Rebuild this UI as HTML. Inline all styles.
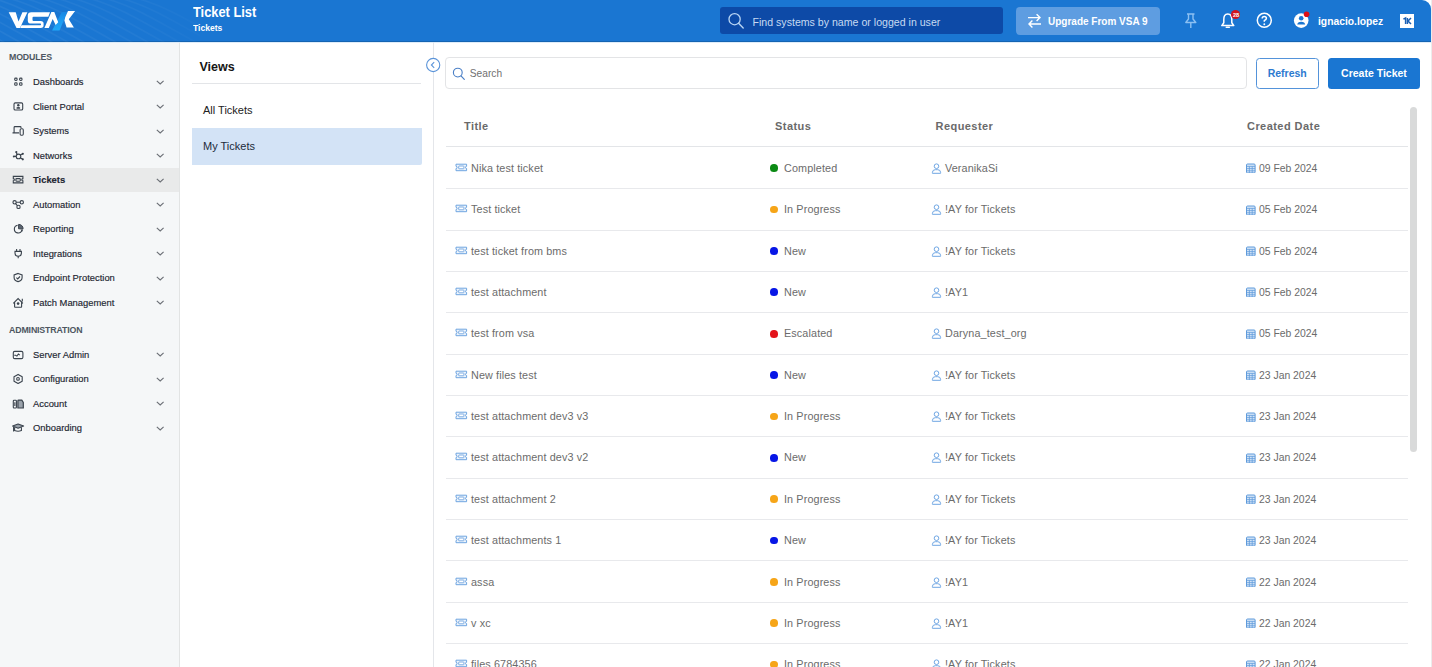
<!DOCTYPE html>
<html><head><meta charset="utf-8">
<style>
*{box-sizing:border-box;margin:0;padding:0}
html,body{width:1432px;height:667px;overflow:hidden;background:#fff;font-family:"Liberation Sans",sans-serif}
.abs{position:absolute}
svg{display:block}
#hdr{position:absolute;left:0;top:0;width:1431px;height:42px;background:#1a76d2;border-top-right-radius:9px;overflow:hidden}
#hdr .line{position:absolute;left:0;right:0;bottom:0;height:1px;background:#1464b2}
.ht{position:absolute;color:#fff;white-space:nowrap}
#side{position:absolute;left:0;top:42px;width:180px;height:625px;background:#f5f7f8;border-right:1px solid #e2e4e4}
.sec{position:absolute;left:9px;font-size:8.8px;font-weight:bold;color:#4d5661;letter-spacing:-.15px}
.it{position:absolute;left:0;width:179px;height:24px}
.it .tx{position:absolute;left:33px;top:6.7px;font-size:9.4px;color:#1c2530;white-space:nowrap;-webkit-text-stroke:.15px #1c2530}
.it svg.ic{position:absolute;left:10.5px;top:4.5px}
.it svg.ch{position:absolute;left:156px;top:10px}
.it.sel{background:#e9eaea}
.it.sel .tx{font-weight:bold}
#views{position:absolute;left:180px;top:42px;width:254px;height:625px;background:#fff;border-right:1px solid #e4e6ea}
#main{position:absolute;left:434px;top:42px;width:998px;height:625px;background:#fff}
.row{position:absolute;left:12px;width:962px;height:41.4px;border-bottom:1px solid #e8e9ec}
.row .c{position:absolute;top:14px;font-size:10.8px;letter-spacing:.12px;color:#6b6b6b;white-space:nowrap}
.row svg.tk{position:absolute;left:8.5px;top:15px}
.row svg.us{position:absolute;left:485px;top:15px}
.row svg.cal{position:absolute;left:799.5px;top:15.5px}
.dot{position:absolute;left:324.2px;top:16.6px;width:7.7px;height:7.7px;border-radius:50%}
.dot.g{background:#0b8a14}.dot.o{background:#f6a518}.dot.b{background:#0716e6}.dot.r{background:#e3141b}
.th{position:absolute;top:78px;font-size:11px;font-weight:bold;color:#6a6a6a;letter-spacing:.45px;white-space:nowrap}
</style></head><body>


<div id="hdr">
  <div class="line"></div>
  <svg class="abs" style="left:0;top:0" width="200" height="42" viewBox="0 0 200 42"><defs><linearGradient id="wg" x1="0" y1="0" x2="1" y2="0"><stop offset="0" stop-color="#fff" stop-opacity=".06"/><stop offset=".75" stop-color="#fff" stop-opacity=".035"/><stop offset="1" stop-color="#fff" stop-opacity="0"/></linearGradient></defs><path d="M-120,-2 C-90,6 -65,22 -25,44 M-104,-2 C-74,6 -49,22 -9,44 M-88,-2 C-58,6 -33,22 7,44 M-72,-2 C-42,6 -17,22 23,44 M-56,-2 C-26,6 -1,22 39,44 M-40,-2 C-10,6 15,22 55,44 M-24,-2 C6,6 31,22 71,44 M-8,-2 C22,6 47,22 87,44 M8,-2 C38,6 63,22 103,44 M24,-2 C54,6 79,22 119,44 M40,-2 C70,6 95,22 135,44 M56,-2 C86,6 111,22 151,44 M72,-2 C102,6 127,22 167,44 M88,-2 C118,6 143,22 183,44 M104,-2 C134,6 159,22 199,44 M120,-2 C150,6 175,22 215,44 M136,-2 C166,6 191,22 231,44" fill="none" stroke="url(#wg)" stroke-width="1.6"/></svg>
  <!-- logo -->
  <svg class="abs" style="left:8px;top:11px" width="70" height="21" viewBox="0 0 70 21">
    <path d="M0.7,1.3 H7.7 L10.5,10.4 L14.4,1.3 H19.4 L12,16.9 H8.5 Z" fill="#fff"/>
    <path d="M23.5,1.3 H42 L40.3,5.8 H25.5 Q24.5,5.8 24.5,6.8 V8.9 Q24.5,9.9 25.5,9.9 H32.6 Q35.6,9.9 35.6,12.6 V14.2 Q35.6,16.9 32.6,16.9 H12.2 L13.5,14.2 H32.4 Q33,14.2 33,13.4 Q33,12.6 32.4,12.6 H23.2 Q19.8,12.6 19.8,9.4 V4.6 Q19.8,1.3 23.5,1.3 Z" fill="#fff"/>
    <defs><linearGradient id="lg1" x1="0" y1="0" x2="0" y2="1"><stop offset="0" stop-color="#1a86e2"/><stop offset="0.4" stop-color="#1c98ef"/><stop offset="1" stop-color="#21a9f9"/></linearGradient></defs><path d="M53.8,0.9 H59.3 L51.5,19.6 H44.1 Z" fill="url(#lg1)"/>
    <path d="M36.4,16.9 L43.4,0.9 H46.3 L50.2,11.2 L47.6,14 L44.7,7.9 L40.8,16.9 Z" fill="#fff"/>
    <path d="M60,0.1 H67.1 L60.8,8.3 L65.9,16.5 H58.6 L56.4,9.5 L57.2,6.2 Z" fill="#fff"/>
  </svg>
  <div class="ht" style="left:192.5px;top:3.5px;font-size:14.2px;font-weight:bold;transform:scaleX(.905);transform-origin:0 0">Ticket List</div>
  <div class="ht" style="left:192.8px;top:23.3px;font-size:9.2px;font-weight:bold;transform:scaleX(.93);transform-origin:0 0">Tickets</div>
  <!-- search -->
  <div class="abs" style="left:720px;top:7px;width:283px;height:27px;background:#0d4aa7;border-radius:3px"></div>
  <svg class="abs" style="left:727px;top:12px" width="18" height="18" viewBox="0 0 18 18"><circle cx="7.6" cy="7.2" r="5.6" fill="none" stroke="#b9d5f4" stroke-width="1.3"/><path d="M11.6,11.3 L16.2,15.9" stroke="#b9d5f4" stroke-width="1.4" stroke-linecap="round"/></svg>
  <div class="ht" style="left:752.5px;top:15.5px;font-size:10.6px;color:#c7daf2">Find systems by name or logged in user</div>
  <!-- upgrade -->
  <div class="abs" style="left:1016px;top:7px;width:144px;height:27.5px;background:#5e9de1;border-radius:4px"></div>
  <svg class="abs" style="left:1027px;top:13px" width="15" height="16" viewBox="0 0 15 16"><path d="M1,4.6 H13 M9.6,1.2 L13,4.6 L9.6,8" fill="none" stroke="#fff" stroke-width="1.4"/><path d="M14,11 H2 M5.4,7.6 L2,11 L5.4,14.4" fill="none" stroke="#fff" stroke-width="1.4"/></svg>
  <div class="ht" style="left:1048px;top:15.6px;font-size:10px;font-weight:bold">Upgrade From VSA 9</div>
  <!-- pin -->
  <svg class="abs" style="left:1184px;top:13px" width="14" height="16" viewBox="0 0 14 16"><path d="M3,1 H10.5 M4.5,1 V6 L1.8,9.5 H11.8 L9,6 V1 M6.8,9.5 V15" fill="none" stroke="#8cc0f2" stroke-width="1.4" stroke-linejoin="round"/></svg>
  <!-- bell -->
  <svg class="abs" style="left:1220px;top:12px" width="16" height="17" viewBox="0 0 16 17"><path d="M7.8,2 C4.6,2 3.8,4.6 3.8,7.5 V10.8 L1.8,13.6 H13.8 L11.8,10.8 V7.5 C11.8,4.6 11,2 7.8,2 Z" fill="none" stroke="#fff" stroke-width="1.5" stroke-linejoin="round"/><path d="M6.3,15.2 H9.3" stroke="#fff" stroke-width="1.6" stroke-linecap="round"/></svg>
  <div class="abs" style="left:1230.5px;top:9.8px;width:9.6px;height:9.6px;border-radius:50%;background:#d3121c"></div><svg class="abs" style="left:1230.5px;top:9.8px" width="10" height="10" viewBox="0 0 10 10"><text x="4.9" y="7.1" text-anchor="middle" font-family="Liberation Sans" font-weight="bold" font-size="5.6" fill="#fff" letter-spacing="-0.2">28</text></svg>
  <!-- help -->
  <svg class="abs" style="left:1256px;top:12px" width="17" height="17" viewBox="0 0 17 17"><circle cx="8.3" cy="8.3" r="7" fill="none" stroke="#fff" stroke-width="1.5"/><path d="M6.2,6.5 Q6.2,4.4 8.3,4.4 Q10.4,4.4 10.4,6.3 Q10.4,7.6 8.3,8.6 V9.8" fill="none" stroke="#fff" stroke-width="1.5"/><circle cx="8.3" cy="12.2" r="0.95" fill="#fff"/></svg>
  <!-- avatar -->
  <svg class="abs" style="left:1293px;top:9px" width="20" height="21" viewBox="0 0 20 21"><circle cx="8.2" cy="11.6" r="7.3" fill="#fff"/><circle cx="8.2" cy="9.3" r="2.3" fill="#1a76d2"/><path d="M4.2,15.6 Q4.5,12.7 8.2,12.7 Q11.9,12.7 12.2,15.6 Z" fill="#1a76d2"/><circle cx="13.6" cy="5.3" r="2.8" fill="#dd0f17"/></svg>
  <div class="ht" style="left:1318px;top:15.5px;font-size:10.3px;font-weight:bold">ignacio.lopez</div>
  <!-- 1K -->
  <div class="abs" style="left:1400px;top:14px;width:14px;height:14px;background:#fff"></div>
  <svg class="abs" style="left:1400px;top:14px" width="14" height="14" viewBox="0 0 14 14"><path d="M3.4,5.2 L5.6,4 V10" fill="none" stroke="#1a5fb4" stroke-width="1.5"/><path d="M7.4,4 V10 M11,4 L8,7 L11,10" fill="none" stroke="#1a5fb4" stroke-width="1.5"/></svg>
</div>

<div id="side">
  <div class="sec" style="top:10px">MODULES</div>
  <!--SIDE-->
<div class="it" style="top:27.5px;height:24.5px"><svg class="ic" width="14" height="14" viewBox="0 0 14 14"><rect x="3.7" y="4.1" width="2.4" height="2.4" rx=".9" fill="none" stroke="#3a434d" stroke-width="1.1" stroke-width="1.45"/><rect x="8.6" y="4.1" width="2.4" height="2.4" rx=".9" fill="none" stroke="#3a434d" stroke-width="1.1" stroke-width="1.45"/><rect x="3.7" y="8.8" width="2.4" height="2.5" rx=".9" fill="none" stroke="#3a434d" stroke-width="1.1" stroke-width="1.45"/><rect x="8.6" y="8.8" width="2.4" height="2.5" rx=".9" fill="none" stroke="#3a434d" stroke-width="1.1" stroke-width="1.45"/></svg><span class="tx">Dashboards</span><svg class="ch" width="9" height="6" viewBox="0 0 9 6"><path d="M0.8,0.8 L4.2,4 L7.6,0.8" fill="none" stroke="#6b6f75" stroke-width="1.1"/></svg></div>
<div class="it" style="top:52.0px;height:24.5px"><svg class="ic" width="14" height="14" viewBox="0 0 14 14"><rect x="3" y="3.9" width="8.7" height="7.1" rx="1.3" fill="none" stroke="#3a434d" stroke-width="1.1" stroke-width="1.25"/><circle cx="7.3" cy="6.3" r="1.2" fill="#3a434d"/><ellipse cx="7.3" cy="8.9" rx="2" ry="0.85" fill="#3a434d"/></svg><span class="tx">Client Portal</span><svg class="ch" width="9" height="6" viewBox="0 0 9 6"><path d="M0.8,0.8 L4.2,4 L7.6,0.8" fill="none" stroke="#6b6f75" stroke-width="1.1"/></svg></div>
<div class="it" style="top:76.5px;height:24.5px"><svg class="ic" width="14" height="14" viewBox="0 0 14 14"><path d="M3.1,9.5 V4.4 Q3.1,3.6 3.9,3.6 H9.3 Q10,3.6 10,4.4 V5 M1.5,9.9 H8" fill="none" stroke="#3a434d" stroke-width="1.1"/><rect x="9.1" y="5.8" width="3.2" height="6.4" rx="1.1" fill="none" stroke="#3a434d" stroke-width="1.1"/></svg><span class="tx">Systems</span><svg class="ch" width="9" height="6" viewBox="0 0 9 6"><path d="M0.8,0.8 L4.2,4 L7.6,0.8" fill="none" stroke="#6b6f75" stroke-width="1.1"/></svg></div>
<div class="it" style="top:101.0px;height:24.5px"><svg class="ic" width="14" height="14" viewBox="0 0 14 14"><circle cx="7.5" cy="8.4" r="2.3" fill="none" stroke="#3a434d" stroke-width="1.1"/><path d="M5.2,8.4 H3 M6.2,6.4 L5.2,4.3 M9.3,7 L11.7,5.8 M9.3,9.8 L11.7,11.2" fill="none" stroke="#3a434d" stroke-width="1.1"/><circle cx="2.8" cy="8.4" r="1" fill="#3a434d"/><circle cx="5.3" cy="4.1" r="1.1" fill="#3a434d"/><circle cx="11.8" cy="5.8" r="1.1" fill="#3a434d"/><circle cx="11.8" cy="11.3" r="1.1" fill="#3a434d"/></svg><span class="tx">Networks</span><svg class="ch" width="9" height="6" viewBox="0 0 9 6"><path d="M0.8,0.8 L4.2,4 L7.6,0.8" fill="none" stroke="#6b6f75" stroke-width="1.1"/></svg></div>
<div class="it sel" style="top:125.5px;height:24.5px"><svg class="ic" width="14" height="14" viewBox="0 0 14 14"><path d="M2.3,4.4 H11.9 V6.6 A1.1,1.1 0 0 0 11.9,8.8 V10.9 H2.3 V8.8 A1.1,1.1 0 0 0 2.3,6.6 Z" fill="none" stroke="#3a434d" stroke-width="1.1"/><rect x="4.9" y="6.6" width="4.4" height="2.6" rx=".6" fill="none" stroke="#3a434d" stroke-width="1.1"/></svg><span class="tx">Tickets</span><svg class="ch" width="9" height="6" viewBox="0 0 9 6"><path d="M0.8,0.8 L4.2,4 L7.6,0.8" fill="none" stroke="#6b6f75" stroke-width="1.1"/></svg></div>
<div class="it" style="top:150.0px;height:24.5px"><svg class="ic" width="14" height="14" viewBox="0 0 14 14"><circle cx="3.6" cy="5.3" r="1.65" fill="none" stroke="#3a434d" stroke-width="1.1"/><circle cx="10.8" cy="5.3" r="1.65" fill="none" stroke="#3a434d" stroke-width="1.1"/><circle cx="7.5" cy="9.9" r="1.65" fill="none" stroke="#3a434d" stroke-width="1.1"/><path d="M5.2,5.3 H9.1 M4.6,6.6 L6.4,8.6" fill="none" stroke="#3a434d" stroke-width="1.1"/></svg><span class="tx">Automation</span><svg class="ch" width="9" height="6" viewBox="0 0 9 6"><path d="M0.8,0.8 L4.2,4 L7.6,0.8" fill="none" stroke="#6b6f75" stroke-width="1.1"/></svg></div>
<div class="it" style="top:174.5px;height:24.5px"><svg class="ic" width="14" height="14" viewBox="0 0 14 14"><path d="M6.6,4.2 A3.9,3.9 0 1 0 10.9,9.4" fill="none" stroke="#3a434d" stroke-width="1.1"/><path d="M7.6,3.4 A4.3,4.3 0 0 1 12.1,7.8 H7.6 Z" fill="#5b6470" stroke="#3a434d" stroke-width="1"/><path d="M9.6,8.6 L12.2,8.6 L11,11 Z" fill="#3a434d"/></svg><span class="tx">Reporting</span><svg class="ch" width="9" height="6" viewBox="0 0 9 6"><path d="M0.8,0.8 L4.2,4 L7.6,0.8" fill="none" stroke="#6b6f75" stroke-width="1.1"/></svg></div>
<div class="it" style="top:199.0px;height:24.5px"><svg class="ic" width="14" height="14" viewBox="0 0 14 14"><path d="M5.6,3 V5.2 M9,3 V5.2" fill="none" stroke="#3a434d" stroke-width="1.1" stroke-width="1.4"/><path d="M4,5.4 H10.4 V7.3 Q10.4,10 7.2,10.2 Q4,10 4,7.3 Z M7.2,10.2 V12.3" fill="none" stroke="#3a434d" stroke-width="1.1" stroke-width="1.3"/></svg><span class="tx">Integrations</span><svg class="ch" width="9" height="6" viewBox="0 0 9 6"><path d="M0.8,0.8 L4.2,4 L7.6,0.8" fill="none" stroke="#6b6f75" stroke-width="1.1"/></svg></div>
<div class="it" style="top:223.5px;height:24.5px"><svg class="ic" width="14" height="14" viewBox="0 0 14 14"><path d="M7.1,3.4 L11.1,4.9 V7.4 Q11.1,10.6 7.1,11.6 Q3.1,10.6 3.1,7.4 V4.9 Z" fill="none" stroke="#3a434d" stroke-width="1.1" stroke-width="1.25"/><path d="M5.4,7.7 L6.7,8.9 L9,6.5" fill="none" stroke="#3a434d" stroke-width="1.1" stroke-width="1.2"/></svg><span class="tx">Endpoint Protection</span><svg class="ch" width="9" height="6" viewBox="0 0 9 6"><path d="M0.8,0.8 L4.2,4 L7.6,0.8" fill="none" stroke="#6b6f75" stroke-width="1.1"/></svg></div>
<div class="it" style="top:248.0px;height:24.5px"><svg class="ic" width="14" height="14" viewBox="0 0 14 14"><path d="M2.3,8.3 L7.1,3.6 L11.9,8.3 M3.6,7.2 V11.8 Q3.6,12.2 4,12.2 H10.2 Q10.6,12.2 10.6,11.8 V7.2 M11.3,3.8 V6.6" fill="none" stroke="#3a434d" stroke-width="1.1" stroke-width="1.25"/><circle cx="7.1" cy="8.6" r="1.3" fill="#3a434d"/></svg><span class="tx">Patch Management</span><svg class="ch" width="9" height="6" viewBox="0 0 9 6"><path d="M0.8,0.8 L4.2,4 L7.6,0.8" fill="none" stroke="#6b6f75" stroke-width="1.1"/></svg></div>
<div class="it" style="top:300.0px;height:24.5px"><svg class="ic" width="14" height="14" viewBox="0 0 14 14"><rect x="2.3" y="4.4" width="9.6" height="7.2" rx="1.4" fill="none" stroke="#3a434d" stroke-width="1.1" stroke-width="1.2"/><path d="M3.2,8.3 H4.6 L5.9,9.1 L7.4,7 L8.8,8.2" fill="none" stroke="#3a434d" stroke-width="1.1" stroke-width="1.1"/></svg><span class="tx">Server Admin</span><svg class="ch" width="9" height="6" viewBox="0 0 9 6"><path d="M0.8,0.8 L4.2,4 L7.6,0.8" fill="none" stroke="#6b6f75" stroke-width="1.1"/></svg></div>
<div class="it" style="top:324.5px;height:24.5px"><svg class="ic" width="14" height="14" viewBox="0 0 14 14"><path d="M7.1,3.4 L11.2,5.7 V10.2 L7.1,12.5 L3,10.2 V5.7 Z" fill="none" stroke="#3a434d" stroke-width="1.1" stroke-width="1.2" stroke-linejoin="round"/><circle cx="7" cy="7.9" r="1.35" fill="none" stroke="#3a434d" stroke-width="1.1"/></svg><span class="tx">Configuration</span><svg class="ch" width="9" height="6" viewBox="0 0 9 6"><path d="M0.8,0.8 L4.2,4 L7.6,0.8" fill="none" stroke="#6b6f75" stroke-width="1.1"/></svg></div>
<div class="it" style="top:349.0px;height:24.5px"><svg class="ic" width="14" height="14" viewBox="0 0 14 14"><rect x="2.3" y="4.3" width="3.1" height="7.7" rx=".7" fill="none" stroke="#3a434d" stroke-width="1.1" stroke-width="1.2"/><path d="M3.85,6.3 V10" fill="none" stroke="#3a434d" stroke-width="1.1"/><path d="M6.9,12 H12.3 V6.4 L10.8,4.1 H7.5 Q6.9,4.1 6.9,4.7 Z" fill="#9aa2ab" stroke="#3a434d" stroke-width="1.2"/></svg><span class="tx">Account</span><svg class="ch" width="9" height="6" viewBox="0 0 9 6"><path d="M0.8,0.8 L4.2,4 L7.6,0.8" fill="none" stroke="#6b6f75" stroke-width="1.1"/></svg></div>
<div class="it" style="top:373.5px;height:24.5px"><svg class="ic" width="14" height="14" viewBox="0 0 14 14"><path d="M1.6,6.1 L7.1,4 L12.6,6.1 L7.1,8.2 Z" fill="#9aa2ab" stroke="#3a434d" stroke-width="1.1" stroke-linejoin="round"/><path d="M3.6,7.2 V10.6 Q7.1,12 10.4,10.6 V7.2" fill="none" stroke="#3a434d" stroke-width="1.1" stroke-width="1.2"/><path d="M2.6,7 V11.4" fill="none" stroke="#3a434d" stroke-width="1.1" stroke-width="1.4"/></svg><span class="tx">Onboarding</span><svg class="ch" width="9" height="6" viewBox="0 0 9 6"><path d="M0.8,0.8 L4.2,4 L7.6,0.8" fill="none" stroke="#6b6f75" stroke-width="1.1"/></svg></div>
<!--/SIDE-->
  <div class="sec" style="top:282.6px">ADMINISTRATION</div>
</div>

<div id="views">
  <div class="abs" style="left:19.5px;top:18px;font-size:12.5px;font-weight:bold;color:#161616">Views</div>
  <div class="abs" style="left:12px;top:41px;width:229px;height:1px;background:#e3e5e8"></div>
  <div class="abs" style="left:23px;top:61.8px;font-size:11px;color:#222">All Tickets</div>
  <div class="abs" style="left:12px;top:86px;width:229.7px;height:36.5px;background:#d3e3f6;border-radius:0 0 2px 0"></div>
  <div class="abs" style="left:23px;top:97.8px;font-size:11px;color:#1d2a3a">My Tickets</div>
</div>

<div id="main">
  <div class="abs" style="left:11px;top:15px;width:801.5px;height:31.6px;border:1px solid #e3e4e6;border-radius:4px"></div>
  <svg class="abs" style="left:17px;top:24px" width="16" height="16" viewBox="0 0 16 16"><circle cx="6.8" cy="6.6" r="4.4" fill="none" stroke="#4a7fc6" stroke-width="1.1"/><path d="M10,9.9 L13.3,13.3" stroke="#4a7fc6" stroke-width="1.2" stroke-linecap="round"/></svg>
  <div class="abs" style="left:35.8px;top:26.4px;font-size:10.2px;color:#707070">Search</div>
  <div class="abs" style="left:821.5px;top:16.2px;width:63.5px;height:30.5px;border:1px solid #5393da;border-radius:3.5px;color:#2d7ad0;font-size:10.5px;font-weight:bold;text-align:center;line-height:29.7px">Refresh</div>
  <div class="abs" style="left:894px;top:16.2px;width:92px;height:30.5px;background:#1a76d2;border-radius:3.5px;color:#fff;font-size:10.5px;font-weight:bold;text-align:center;line-height:31.7px">Create Ticket</div>
  <div class="th" style="left:30px">Title</div>
  <div class="th" style="left:341px">Status</div>
  <div class="th" style="left:501.5px">Requester</div>
  <div class="th" style="left:813px">Created Date</div>
  <div class="abs" style="left:12px;top:104px;width:962px;height:1px;background:#e3e5e8"></div>
  <!--ROWS-->
<div class="row" style="top:105.8px"><svg class="tk" width="13" height="9"><path d="M1,1.2 H11.6 V3.3 A1.1,1.1 0 0 0 11.6,5.5 V7.7 H1 V5.5 A1.1,1.1 0 0 0 1,3.3 Z" fill="#eef5fc" stroke="#6ea4e0" stroke-width="1"/><rect x="3.7" y="3" width="5.2" height="2.8" rx=".5" fill="#fff" stroke="#6ea4e0" stroke-width="0.9"/></svg><span class="c" style="left:25px">Nika test ticket</span><i class="dot g"></i><span class="c" style="left:338px">Completed</span><svg class="us" width="11" height="11"><circle cx="5.5" cy="3.2" r="2.3" fill="none" stroke="#6fa6e3" stroke-width="1"/><path d="M1.4,10.3 V9.4 A2.9,2.9 0 0 1 4.3,6.7 H6.7 A2.9,2.9 0 0 1 9.6,9.4 V10.3 Z" fill="none" stroke="#6fa6e3" stroke-width="1"/></svg><span class="c" style="left:499px">VeranikaSi</span><svg class="cal" width="10" height="10"><rect x="0.5" y="1" width="8.6" height="9" rx="1" fill="#d2e3f7" stroke="#5f9bdb" stroke-width="1"/><path d="M0.5,3.4 H9.1 M0.5,5.6 H9.1 M0.5,7.8 H9.1 M3.4,3.4 V10 M6.2,3.4 V10" stroke="#5f9bdb" stroke-width="0.75"/></svg><span class="c" style="left:813px;top:15px;font-size:10.4px;letter-spacing:0">09 Feb 2024</span></div>
<div class="row" style="top:147.2px"><svg class="tk" width="13" height="9"><path d="M1,1.2 H11.6 V3.3 A1.1,1.1 0 0 0 11.6,5.5 V7.7 H1 V5.5 A1.1,1.1 0 0 0 1,3.3 Z" fill="#eef5fc" stroke="#6ea4e0" stroke-width="1"/><rect x="3.7" y="3" width="5.2" height="2.8" rx=".5" fill="#fff" stroke="#6ea4e0" stroke-width="0.9"/></svg><span class="c" style="left:25px">Test ticket</span><i class="dot o"></i><span class="c" style="left:338px">In Progress</span><svg class="us" width="11" height="11"><circle cx="5.5" cy="3.2" r="2.3" fill="none" stroke="#6fa6e3" stroke-width="1"/><path d="M1.4,10.3 V9.4 A2.9,2.9 0 0 1 4.3,6.7 H6.7 A2.9,2.9 0 0 1 9.6,9.4 V10.3 Z" fill="none" stroke="#6fa6e3" stroke-width="1"/></svg><span class="c" style="left:499px">!AY for Tickets</span><svg class="cal" width="10" height="10"><rect x="0.5" y="1" width="8.6" height="9" rx="1" fill="#d2e3f7" stroke="#5f9bdb" stroke-width="1"/><path d="M0.5,3.4 H9.1 M0.5,5.6 H9.1 M0.5,7.8 H9.1 M3.4,3.4 V10 M6.2,3.4 V10" stroke="#5f9bdb" stroke-width="0.75"/></svg><span class="c" style="left:813px;top:15px;font-size:10.4px;letter-spacing:0">05 Feb 2024</span></div>
<div class="row" style="top:188.5px"><svg class="tk" width="13" height="9"><path d="M1,1.2 H11.6 V3.3 A1.1,1.1 0 0 0 11.6,5.5 V7.7 H1 V5.5 A1.1,1.1 0 0 0 1,3.3 Z" fill="#eef5fc" stroke="#6ea4e0" stroke-width="1"/><rect x="3.7" y="3" width="5.2" height="2.8" rx=".5" fill="#fff" stroke="#6ea4e0" stroke-width="0.9"/></svg><span class="c" style="left:25px">test ticket from bms</span><i class="dot b"></i><span class="c" style="left:338px">New</span><svg class="us" width="11" height="11"><circle cx="5.5" cy="3.2" r="2.3" fill="none" stroke="#6fa6e3" stroke-width="1"/><path d="M1.4,10.3 V9.4 A2.9,2.9 0 0 1 4.3,6.7 H6.7 A2.9,2.9 0 0 1 9.6,9.4 V10.3 Z" fill="none" stroke="#6fa6e3" stroke-width="1"/></svg><span class="c" style="left:499px">!AY for Tickets</span><svg class="cal" width="10" height="10"><rect x="0.5" y="1" width="8.6" height="9" rx="1" fill="#d2e3f7" stroke="#5f9bdb" stroke-width="1"/><path d="M0.5,3.4 H9.1 M0.5,5.6 H9.1 M0.5,7.8 H9.1 M3.4,3.4 V10 M6.2,3.4 V10" stroke="#5f9bdb" stroke-width="0.75"/></svg><span class="c" style="left:813px;top:15px;font-size:10.4px;letter-spacing:0">05 Feb 2024</span></div>
<div class="row" style="top:229.9px"><svg class="tk" width="13" height="9"><path d="M1,1.2 H11.6 V3.3 A1.1,1.1 0 0 0 11.6,5.5 V7.7 H1 V5.5 A1.1,1.1 0 0 0 1,3.3 Z" fill="#eef5fc" stroke="#6ea4e0" stroke-width="1"/><rect x="3.7" y="3" width="5.2" height="2.8" rx=".5" fill="#fff" stroke="#6ea4e0" stroke-width="0.9"/></svg><span class="c" style="left:25px">test attachment</span><i class="dot b"></i><span class="c" style="left:338px">New</span><svg class="us" width="11" height="11"><circle cx="5.5" cy="3.2" r="2.3" fill="none" stroke="#6fa6e3" stroke-width="1"/><path d="M1.4,10.3 V9.4 A2.9,2.9 0 0 1 4.3,6.7 H6.7 A2.9,2.9 0 0 1 9.6,9.4 V10.3 Z" fill="none" stroke="#6fa6e3" stroke-width="1"/></svg><span class="c" style="left:499px">!AY1</span><svg class="cal" width="10" height="10"><rect x="0.5" y="1" width="8.6" height="9" rx="1" fill="#d2e3f7" stroke="#5f9bdb" stroke-width="1"/><path d="M0.5,3.4 H9.1 M0.5,5.6 H9.1 M0.5,7.8 H9.1 M3.4,3.4 V10 M6.2,3.4 V10" stroke="#5f9bdb" stroke-width="0.75"/></svg><span class="c" style="left:813px;top:15px;font-size:10.4px;letter-spacing:0">05 Feb 2024</span></div>
<div class="row" style="top:271.3px"><svg class="tk" width="13" height="9"><path d="M1,1.2 H11.6 V3.3 A1.1,1.1 0 0 0 11.6,5.5 V7.7 H1 V5.5 A1.1,1.1 0 0 0 1,3.3 Z" fill="#eef5fc" stroke="#6ea4e0" stroke-width="1"/><rect x="3.7" y="3" width="5.2" height="2.8" rx=".5" fill="#fff" stroke="#6ea4e0" stroke-width="0.9"/></svg><span class="c" style="left:25px">test from vsa</span><i class="dot r"></i><span class="c" style="left:338px">Escalated</span><svg class="us" width="11" height="11"><circle cx="5.5" cy="3.2" r="2.3" fill="none" stroke="#6fa6e3" stroke-width="1"/><path d="M1.4,10.3 V9.4 A2.9,2.9 0 0 1 4.3,6.7 H6.7 A2.9,2.9 0 0 1 9.6,9.4 V10.3 Z" fill="none" stroke="#6fa6e3" stroke-width="1"/></svg><span class="c" style="left:499px">Daryna_test_org</span><svg class="cal" width="10" height="10"><rect x="0.5" y="1" width="8.6" height="9" rx="1" fill="#d2e3f7" stroke="#5f9bdb" stroke-width="1"/><path d="M0.5,3.4 H9.1 M0.5,5.6 H9.1 M0.5,7.8 H9.1 M3.4,3.4 V10 M6.2,3.4 V10" stroke="#5f9bdb" stroke-width="0.75"/></svg><span class="c" style="left:813px;top:15px;font-size:10.4px;letter-spacing:0">05 Feb 2024</span></div>
<div class="row" style="top:312.6px"><svg class="tk" width="13" height="9"><path d="M1,1.2 H11.6 V3.3 A1.1,1.1 0 0 0 11.6,5.5 V7.7 H1 V5.5 A1.1,1.1 0 0 0 1,3.3 Z" fill="#eef5fc" stroke="#6ea4e0" stroke-width="1"/><rect x="3.7" y="3" width="5.2" height="2.8" rx=".5" fill="#fff" stroke="#6ea4e0" stroke-width="0.9"/></svg><span class="c" style="left:25px">New files test</span><i class="dot b"></i><span class="c" style="left:338px">New</span><svg class="us" width="11" height="11"><circle cx="5.5" cy="3.2" r="2.3" fill="none" stroke="#6fa6e3" stroke-width="1"/><path d="M1.4,10.3 V9.4 A2.9,2.9 0 0 1 4.3,6.7 H6.7 A2.9,2.9 0 0 1 9.6,9.4 V10.3 Z" fill="none" stroke="#6fa6e3" stroke-width="1"/></svg><span class="c" style="left:499px">!AY for Tickets</span><svg class="cal" width="10" height="10"><rect x="0.5" y="1" width="8.6" height="9" rx="1" fill="#d2e3f7" stroke="#5f9bdb" stroke-width="1"/><path d="M0.5,3.4 H9.1 M0.5,5.6 H9.1 M0.5,7.8 H9.1 M3.4,3.4 V10 M6.2,3.4 V10" stroke="#5f9bdb" stroke-width="0.75"/></svg><span class="c" style="left:813px;top:15px;font-size:10.4px;letter-spacing:0">23 Jan 2024</span></div>
<div class="row" style="top:354.0px"><svg class="tk" width="13" height="9"><path d="M1,1.2 H11.6 V3.3 A1.1,1.1 0 0 0 11.6,5.5 V7.7 H1 V5.5 A1.1,1.1 0 0 0 1,3.3 Z" fill="#eef5fc" stroke="#6ea4e0" stroke-width="1"/><rect x="3.7" y="3" width="5.2" height="2.8" rx=".5" fill="#fff" stroke="#6ea4e0" stroke-width="0.9"/></svg><span class="c" style="left:25px">test attachment dev3 v3</span><i class="dot o"></i><span class="c" style="left:338px">In Progress</span><svg class="us" width="11" height="11"><circle cx="5.5" cy="3.2" r="2.3" fill="none" stroke="#6fa6e3" stroke-width="1"/><path d="M1.4,10.3 V9.4 A2.9,2.9 0 0 1 4.3,6.7 H6.7 A2.9,2.9 0 0 1 9.6,9.4 V10.3 Z" fill="none" stroke="#6fa6e3" stroke-width="1"/></svg><span class="c" style="left:499px">!AY for Tickets</span><svg class="cal" width="10" height="10"><rect x="0.5" y="1" width="8.6" height="9" rx="1" fill="#d2e3f7" stroke="#5f9bdb" stroke-width="1"/><path d="M0.5,3.4 H9.1 M0.5,5.6 H9.1 M0.5,7.8 H9.1 M3.4,3.4 V10 M6.2,3.4 V10" stroke="#5f9bdb" stroke-width="0.75"/></svg><span class="c" style="left:813px;top:15px;font-size:10.4px;letter-spacing:0">23 Jan 2024</span></div>
<div class="row" style="top:395.4px"><svg class="tk" width="13" height="9"><path d="M1,1.2 H11.6 V3.3 A1.1,1.1 0 0 0 11.6,5.5 V7.7 H1 V5.5 A1.1,1.1 0 0 0 1,3.3 Z" fill="#eef5fc" stroke="#6ea4e0" stroke-width="1"/><rect x="3.7" y="3" width="5.2" height="2.8" rx=".5" fill="#fff" stroke="#6ea4e0" stroke-width="0.9"/></svg><span class="c" style="left:25px">test attachment dev3 v2</span><i class="dot b"></i><span class="c" style="left:338px">New</span><svg class="us" width="11" height="11"><circle cx="5.5" cy="3.2" r="2.3" fill="none" stroke="#6fa6e3" stroke-width="1"/><path d="M1.4,10.3 V9.4 A2.9,2.9 0 0 1 4.3,6.7 H6.7 A2.9,2.9 0 0 1 9.6,9.4 V10.3 Z" fill="none" stroke="#6fa6e3" stroke-width="1"/></svg><span class="c" style="left:499px">!AY for Tickets</span><svg class="cal" width="10" height="10"><rect x="0.5" y="1" width="8.6" height="9" rx="1" fill="#d2e3f7" stroke="#5f9bdb" stroke-width="1"/><path d="M0.5,3.4 H9.1 M0.5,5.6 H9.1 M0.5,7.8 H9.1 M3.4,3.4 V10 M6.2,3.4 V10" stroke="#5f9bdb" stroke-width="0.75"/></svg><span class="c" style="left:813px;top:15px;font-size:10.4px;letter-spacing:0">23 Jan 2024</span></div>
<div class="row" style="top:436.8px"><svg class="tk" width="13" height="9"><path d="M1,1.2 H11.6 V3.3 A1.1,1.1 0 0 0 11.6,5.5 V7.7 H1 V5.5 A1.1,1.1 0 0 0 1,3.3 Z" fill="#eef5fc" stroke="#6ea4e0" stroke-width="1"/><rect x="3.7" y="3" width="5.2" height="2.8" rx=".5" fill="#fff" stroke="#6ea4e0" stroke-width="0.9"/></svg><span class="c" style="left:25px">test attachment 2</span><i class="dot o"></i><span class="c" style="left:338px">In Progress</span><svg class="us" width="11" height="11"><circle cx="5.5" cy="3.2" r="2.3" fill="none" stroke="#6fa6e3" stroke-width="1"/><path d="M1.4,10.3 V9.4 A2.9,2.9 0 0 1 4.3,6.7 H6.7 A2.9,2.9 0 0 1 9.6,9.4 V10.3 Z" fill="none" stroke="#6fa6e3" stroke-width="1"/></svg><span class="c" style="left:499px">!AY for Tickets</span><svg class="cal" width="10" height="10"><rect x="0.5" y="1" width="8.6" height="9" rx="1" fill="#d2e3f7" stroke="#5f9bdb" stroke-width="1"/><path d="M0.5,3.4 H9.1 M0.5,5.6 H9.1 M0.5,7.8 H9.1 M3.4,3.4 V10 M6.2,3.4 V10" stroke="#5f9bdb" stroke-width="0.75"/></svg><span class="c" style="left:813px;top:15px;font-size:10.4px;letter-spacing:0">23 Jan 2024</span></div>
<div class="row" style="top:478.1px"><svg class="tk" width="13" height="9"><path d="M1,1.2 H11.6 V3.3 A1.1,1.1 0 0 0 11.6,5.5 V7.7 H1 V5.5 A1.1,1.1 0 0 0 1,3.3 Z" fill="#eef5fc" stroke="#6ea4e0" stroke-width="1"/><rect x="3.7" y="3" width="5.2" height="2.8" rx=".5" fill="#fff" stroke="#6ea4e0" stroke-width="0.9"/></svg><span class="c" style="left:25px">test attachments 1</span><i class="dot b"></i><span class="c" style="left:338px">New</span><svg class="us" width="11" height="11"><circle cx="5.5" cy="3.2" r="2.3" fill="none" stroke="#6fa6e3" stroke-width="1"/><path d="M1.4,10.3 V9.4 A2.9,2.9 0 0 1 4.3,6.7 H6.7 A2.9,2.9 0 0 1 9.6,9.4 V10.3 Z" fill="none" stroke="#6fa6e3" stroke-width="1"/></svg><span class="c" style="left:499px">!AY for Tickets</span><svg class="cal" width="10" height="10"><rect x="0.5" y="1" width="8.6" height="9" rx="1" fill="#d2e3f7" stroke="#5f9bdb" stroke-width="1"/><path d="M0.5,3.4 H9.1 M0.5,5.6 H9.1 M0.5,7.8 H9.1 M3.4,3.4 V10 M6.2,3.4 V10" stroke="#5f9bdb" stroke-width="0.75"/></svg><span class="c" style="left:813px;top:15px;font-size:10.4px;letter-spacing:0">23 Jan 2024</span></div>
<div class="row" style="top:519.5px"><svg class="tk" width="13" height="9"><path d="M1,1.2 H11.6 V3.3 A1.1,1.1 0 0 0 11.6,5.5 V7.7 H1 V5.5 A1.1,1.1 0 0 0 1,3.3 Z" fill="#eef5fc" stroke="#6ea4e0" stroke-width="1"/><rect x="3.7" y="3" width="5.2" height="2.8" rx=".5" fill="#fff" stroke="#6ea4e0" stroke-width="0.9"/></svg><span class="c" style="left:25px">assa</span><i class="dot o"></i><span class="c" style="left:338px">In Progress</span><svg class="us" width="11" height="11"><circle cx="5.5" cy="3.2" r="2.3" fill="none" stroke="#6fa6e3" stroke-width="1"/><path d="M1.4,10.3 V9.4 A2.9,2.9 0 0 1 4.3,6.7 H6.7 A2.9,2.9 0 0 1 9.6,9.4 V10.3 Z" fill="none" stroke="#6fa6e3" stroke-width="1"/></svg><span class="c" style="left:499px">!AY1</span><svg class="cal" width="10" height="10"><rect x="0.5" y="1" width="8.6" height="9" rx="1" fill="#d2e3f7" stroke="#5f9bdb" stroke-width="1"/><path d="M0.5,3.4 H9.1 M0.5,5.6 H9.1 M0.5,7.8 H9.1 M3.4,3.4 V10 M6.2,3.4 V10" stroke="#5f9bdb" stroke-width="0.75"/></svg><span class="c" style="left:813px;top:15px;font-size:10.4px;letter-spacing:0">22 Jan 2024</span></div>
<div class="row" style="top:560.9px"><svg class="tk" width="13" height="9"><path d="M1,1.2 H11.6 V3.3 A1.1,1.1 0 0 0 11.6,5.5 V7.7 H1 V5.5 A1.1,1.1 0 0 0 1,3.3 Z" fill="#eef5fc" stroke="#6ea4e0" stroke-width="1"/><rect x="3.7" y="3" width="5.2" height="2.8" rx=".5" fill="#fff" stroke="#6ea4e0" stroke-width="0.9"/></svg><span class="c" style="left:25px">v xc</span><i class="dot o"></i><span class="c" style="left:338px">In Progress</span><svg class="us" width="11" height="11"><circle cx="5.5" cy="3.2" r="2.3" fill="none" stroke="#6fa6e3" stroke-width="1"/><path d="M1.4,10.3 V9.4 A2.9,2.9 0 0 1 4.3,6.7 H6.7 A2.9,2.9 0 0 1 9.6,9.4 V10.3 Z" fill="none" stroke="#6fa6e3" stroke-width="1"/></svg><span class="c" style="left:499px">!AY1</span><svg class="cal" width="10" height="10"><rect x="0.5" y="1" width="8.6" height="9" rx="1" fill="#d2e3f7" stroke="#5f9bdb" stroke-width="1"/><path d="M0.5,3.4 H9.1 M0.5,5.6 H9.1 M0.5,7.8 H9.1 M3.4,3.4 V10 M6.2,3.4 V10" stroke="#5f9bdb" stroke-width="0.75"/></svg><span class="c" style="left:813px;top:15px;font-size:10.4px;letter-spacing:0">22 Jan 2024</span></div>
<div class="row" style="top:602.2px"><svg class="tk" width="13" height="9"><path d="M1,1.2 H11.6 V3.3 A1.1,1.1 0 0 0 11.6,5.5 V7.7 H1 V5.5 A1.1,1.1 0 0 0 1,3.3 Z" fill="#eef5fc" stroke="#6ea4e0" stroke-width="1"/><rect x="3.7" y="3" width="5.2" height="2.8" rx=".5" fill="#fff" stroke="#6ea4e0" stroke-width="0.9"/></svg><span class="c" style="left:25px">files 6784356</span><i class="dot o"></i><span class="c" style="left:338px">In Progress</span><svg class="us" width="11" height="11"><circle cx="5.5" cy="3.2" r="2.3" fill="none" stroke="#6fa6e3" stroke-width="1"/><path d="M1.4,10.3 V9.4 A2.9,2.9 0 0 1 4.3,6.7 H6.7 A2.9,2.9 0 0 1 9.6,9.4 V10.3 Z" fill="none" stroke="#6fa6e3" stroke-width="1"/></svg><span class="c" style="left:499px">!AY for Tickets</span><svg class="cal" width="10" height="10"><rect x="0.5" y="1" width="8.6" height="9" rx="1" fill="#d2e3f7" stroke="#5f9bdb" stroke-width="1"/><path d="M0.5,3.4 H9.1 M0.5,5.6 H9.1 M0.5,7.8 H9.1 M3.4,3.4 V10 M6.2,3.4 V10" stroke="#5f9bdb" stroke-width="0.75"/></svg><span class="c" style="left:813px;top:15px;font-size:10.4px;letter-spacing:0">22 Jan 2024</span></div>
<!--/ROWS-->
  <div class="abs" style="left:976.2px;top:65px;width:6.8px;height:345px;background:#d9dada;border-radius:4px"></div>
</div>

<div class="abs" style="left:1431px;top:0;width:1px;height:667px;background:#ececec"></div>
<div class="abs" style="left:0;top:42px;width:1431px;height:1px;background:#d6e7f8;opacity:.8"></div>
<!--COLLAPSE-->
<svg class="abs" style="left:425px;top:56.5px" width="17" height="17" viewBox="0 0 17 17"><circle cx="8.2" cy="8" r="6.6" fill="#fff" stroke="#5b94d9" stroke-width="1.1"/><path d="M9.2,5.2 L6.4,8 L9.2,10.8" fill="none" stroke="#5b94d9" stroke-width="1.1"/></svg>

</body></html>
